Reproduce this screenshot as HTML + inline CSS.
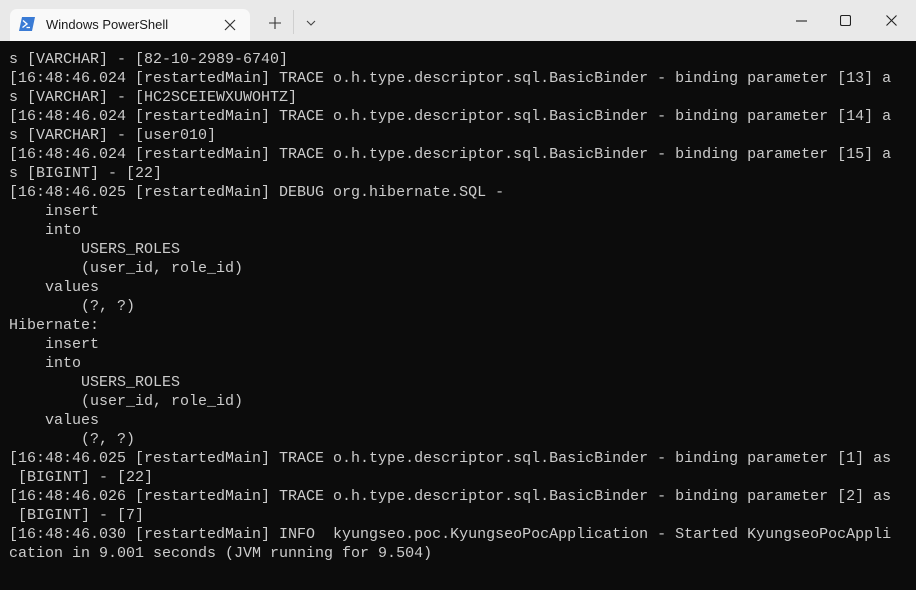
<!DOCTYPE html>
<html><head><style>
html,body{margin:0;padding:0;width:916px;height:590px;overflow:hidden;background:#0c0c0c}
.title{position:absolute;left:0;top:0;width:916px;height:41px;background:#e9e9e9;border-bottom:0}
.tab{position:absolute;left:10px;top:9px;width:240px;height:32px;background:#f9f9f9;border-radius:7px 7px 0 0}
.tab .t{position:absolute;left:36px;top:8px;font:13px "Liberation Sans",sans-serif;color:#1a1a1a}
.tab .x{position:absolute;left:213px;top:7px}
.term{position:absolute;left:0;top:41px;width:916px;height:549px;background:#0c0c0c}
pre{position:absolute;left:9px;top:9px;margin:0;font:15px/19px "Liberation Mono",monospace;color:#cccccc}
svg{position:absolute}
</style></head><body>
<div class="title">
 <div class="tab">
  <svg style="left:9px;top:8px" width="16" height="14" viewBox="0 0 16 14"><path d="M3 0H16L13 14H0Z" fill="#3a7bd5"/><path d="M4 3.5L8 7L3.5 10.5" stroke="#fff" stroke-width="1.4" fill="none"/><path d="M7.5 10.5H11" stroke="#fff" stroke-width="1.3"/></svg>
  <div class="t">Windows PowerShell</div>
  <svg class="x" width="14" height="14" viewBox="0 0 14 14" style="left:213px;top:9px"><path d="M2 2L12 12M12 2L2 12" stroke="#333" stroke-width="1.2"/></svg>
 </div>
 <svg style="left:269px;top:17px" width="12" height="12"><path d="M6 0V12M0 6H12" stroke="#333" stroke-width="1.1"/></svg>
 <div style="position:absolute;left:293px;top:10px;width:1px;height:24px;background:#d0d0d0"></div>
 <svg style="left:306px;top:20px" width="10" height="6"><path d="M1 1L5 5L9 1" stroke="#444" stroke-width="1.1" fill="none"/></svg>
 <svg style="left:796px;top:20px" width="11" height="2"><path d="M0 1H11" stroke="#222" stroke-width="1.1"/></svg>
 <svg style="left:840px;top:15px" width="11" height="11"><rect x="0.5" y="0.5" width="10" height="10" rx="1.5" fill="none" stroke="#222" stroke-width="1.1"/></svg>
 <svg style="left:886px;top:15px" width="11" height="11"><path d="M0.5 0.5L10.5 10.5M10.5 0.5L0.5 10.5" stroke="#222" stroke-width="1.1"/></svg>
</div>
<div class="term"><pre>s [VARCHAR] - [82-10-2989-6740]
[16:48:46.024 [restartedMain] TRACE o.h.type.descriptor.sql.BasicBinder - binding parameter [13] a
s [VARCHAR] - [HC2SCEIEWXUWOHTZ]
[16:48:46.024 [restartedMain] TRACE o.h.type.descriptor.sql.BasicBinder - binding parameter [14] a
s [VARCHAR] - [user010]
[16:48:46.024 [restartedMain] TRACE o.h.type.descriptor.sql.BasicBinder - binding parameter [15] a
s [BIGINT] - [22]
[16:48:46.025 [restartedMain] DEBUG org.hibernate.SQL -
    insert
    into
        USERS_ROLES
        (user_id, role_id)
    values
        (?, ?)
Hibernate:
    insert
    into
        USERS_ROLES
        (user_id, role_id)
    values
        (?, ?)
[16:48:46.025 [restartedMain] TRACE o.h.type.descriptor.sql.BasicBinder - binding parameter [1] as
 [BIGINT] - [22]
[16:48:46.026 [restartedMain] TRACE o.h.type.descriptor.sql.BasicBinder - binding parameter [2] as
 [BIGINT] - [7]
[16:48:46.030 [restartedMain] INFO  kyungseo.poc.KyungseoPocApplication - Started KyungseoPocAppli
cation in 9.001 seconds (JVM running for 9.504)</pre></div>
</body></html>
